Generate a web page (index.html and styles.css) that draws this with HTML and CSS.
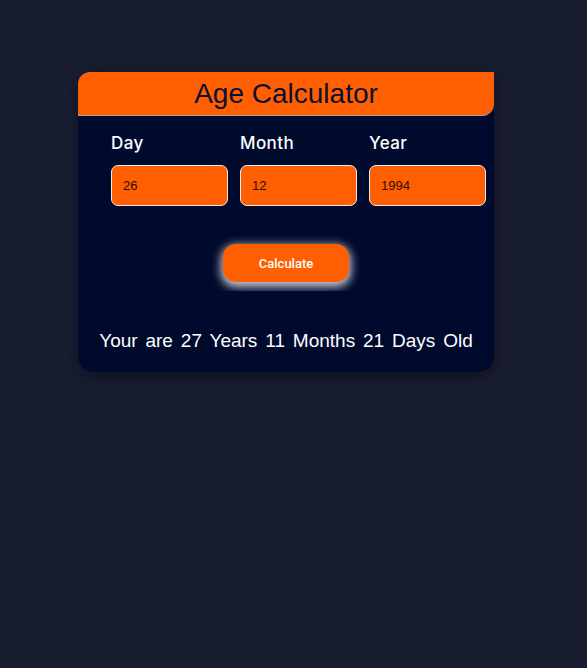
FILE: index.html
```html
<!DOCTYPE html>
<html>
<head>
<meta charset="utf-8">
<link rel="stylesheet" href="styles.css">
</head>
<body>
<div class="card">
  <div class="header"><h1 class="title">Age Calculator</h1></div>
  <div class="fields">
    <div class="field">
      <label class="label">Day</label>
      <input class="input" type="text" value="26">
    </div>
    <div class="field">
      <label class="label">Month</label>
      <input class="input" type="text" value="12">
    </div>
    <div class="field">
      <label class="label">Year</label>
      <input class="input" type="text" value="1994">
    </div>
  </div>
  <div class="btn-wrap"><button class="btn">Calculate</button></div>
  <p class="result">Your are 27 Years 11 Months 21 Days Old</p>
</div>
</body>
</html>
```
FILE: styles.css
```css
html, body {
  margin: 0;
  padding: 0;
  background: #191d30;
  height: 100%;
}
body {
  padding-top: 72px;
  box-sizing: border-box;
}
.card {
  margin-left: 78px;
  width: 416px;
  height: 300px;
  background: #000a2c;
  border-radius: 12px 0 16px 16px;
  box-shadow: 0 4px 14px rgba(8, 10, 20, 0.6);
  display: flex;
  flex-direction: column;
}
.header {
  height: 43px;
  background: #ff5f00;
  border-radius: 12px 0 12px 0;
  border-bottom: 1px solid #a7a4a6;
  display: flex;
  align-items: center;
  justify-content: center;
}
.title {
  margin: 0;
  font-family: "Liberation Sans", Arial, sans-serif;
  font-weight: 400;
  font-size: 28px;
  color: #0b1030;
  line-height: 1;
  padding-top: 1px;
}
.fields {
  display: flex;
  gap: 12px;
  padding: 17px 8px 0 33px;
}
.field {
  display: flex;
  flex-direction: column;
  width: 117px;
}
.label {
  font-family: "Inter", "Open Sans", sans-serif;
  font-size: 17px;
  font-weight: 500;
  letter-spacing: 0.4px;
  color: #ffffff;
  line-height: 20px;
  height: 20px;
  margin-bottom: 12px;
}
.input {
  box-sizing: border-box;
  width: 117px;
  height: 41px;
  margin: 0;
  border: 1px solid #f4e9e4;
  border-radius: 7px;
  background: #ff5f00;
  color: #2a0c00;
  font-family: "Liberation Sans", Arial, sans-serif;
  font-size: 13px;
  padding: 0 11px;
  outline: none;
}
.btn-wrap {
  align-self: center;
  margin-top: 28px;
  padding: 10px 12px 9px;
  overflow: hidden;
  display: flex;
}
.btn {
  width: 126px;
  height: 38px;
  border: none;
  border-radius: 13px;
  background: #ff5f00;
  color: #ffffff;
  font-family: Roboto, "Liberation Sans", sans-serif;
  font-size: 13px;
  font-weight: 500;
  box-shadow: 0 3px 10px 2px rgba(240, 240, 250, 0.85);
  cursor: pointer;
}
.result {
  margin: 38px 0 0;
  text-align: center;
  font-family: "Liberation Sans", Arial, sans-serif;
  font-size: 19px;
  word-spacing: 2.6px;
  color: #ffffff;
  line-height: 24px;
}
```
